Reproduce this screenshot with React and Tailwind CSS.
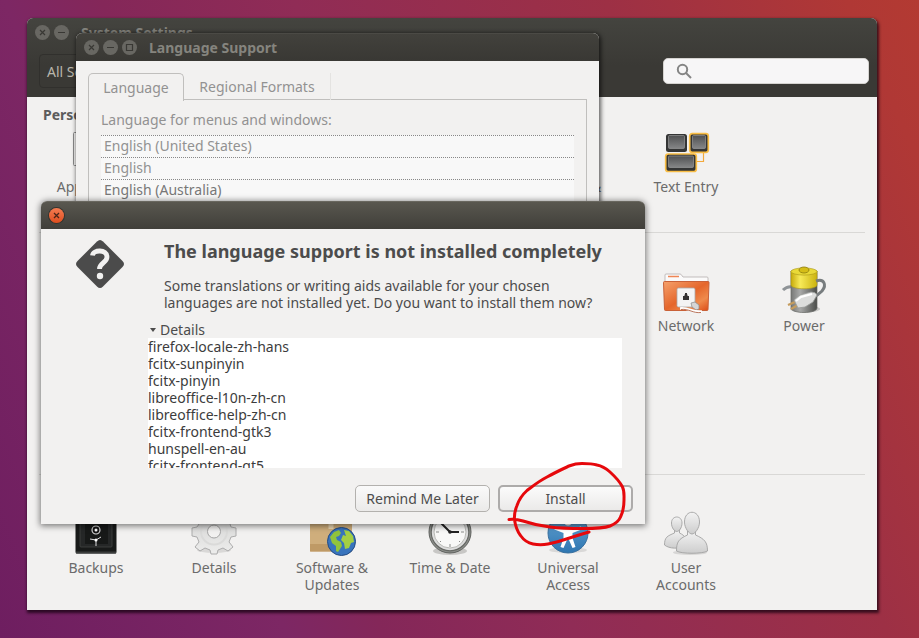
import React from "react";

function DeskIcon({ children }) {
  return (
    <svg viewBox="0 0 48 48" className="h-12 w-12 shrink-0" aria-hidden="true">
      {children}
    </svg>
  );
}

function AppearanceIcon() {
  return (
    <DeskIcon>
      <rect x="1.5" y="5.5" width="45" height="33" rx="1" fill="#f6f5f4" stroke="#8a8a8a" />
      <rect x="5" y="9" width="38" height="26" fill="#7b2866" />
    </DeskIcon>
  );
}

function TextEntryIcon() {
  return (
    <DeskIcon>
      <defs>
        <linearGradient id="keycap" x1="0" y1="0" x2="0" y2="1">
          <stop offset="0" stopColor="#505152" />
          <stop offset="1" stopColor="#858687" />
        </linearGradient>
      </defs>
      <path d="M35 34.500H41.500V26" fill="none" stroke="#f3a93c" strokeWidth="1.200" />
      <rect x="4" y="7" width="21" height="18" rx="2.500" fill="#343535" />
      <rect x="6.500" y="8.500" width="16" height="13" rx="1" fill="url(#keycap)" stroke="#a2a3a3" strokeWidth=".6" />
      <rect x="27.700" y="6.700" width="18.600" height="18.600" rx="2.500" fill="#343535" stroke="#f8bd45" strokeWidth="1.700" />
      <rect x="30.500" y="8.500" width="13" height="13" rx="1" fill="url(#keycap)" stroke="#a2a3a3" strokeWidth=".6" />
      <rect x="3.700" y="27" width="30.600" height="17.500" rx="2.500" fill="#343535" stroke="#f8bd45" strokeWidth="1.700" />
      <rect x="6.500" y="29" width="25" height="11.500" rx="1" fill="url(#keycap)" stroke="#a2a3a3" strokeWidth=".6" />
    </DeskIcon>
  );
}

function NetworkIcon() {
  return (
    <DeskIcon>
      <defs>
        <linearGradient id="folder" x1="0" y1="0" x2="1" y2="1">
          <stop offset="0" stopColor="#f5a16c" />
          <stop offset=".5" stopColor="#e5662b" />
          <stop offset=".75" stopColor="#ef8a4c" />
          <stop offset="1" stopColor="#dc4b16" />
        </linearGradient>
      </defs>
      <path d="M3 44V9q0-1 1-1h14q1 0 1.500 1l1.500 2h24q1 0 1 1v10z" fill="#fbfafa" stroke="#b5afad" strokeWidth=".8" />
      <path d="M6 10.500h11" stroke="#ef8655" strokeWidth="1.500" />
      <path d="M1.500 16.500q0-1 1-1h43.500q1 0 1 1l-1 27q0 1-1 1H3.500q-1 0-1-1z" fill="url(#folder)" stroke="#c96138" strokeWidth="1" />
      <rect x="15" y="22" width="18" height="19" rx="1.500" fill="#f4f4f4" stroke="#aaa" strokeWidth=".8" />
      <path d="M21 30h1.500v-1.500H23V27h2v1.500h.500V30H27v4h-6z" fill="#353333" />
      <path d="m29 37 4-1 4 3v4l-3 1-4-3z" fill="#d5d5d5" stroke="#888" strokeWidth=".7" />
      <path d="M18 42.500c9-1 12 4 22 3" fill="none" stroke="#fff" strokeWidth="2.600" />
      <path d="M19 43.500c8-1 12 4 20 3" fill="none" stroke="#a85232" strokeWidth=".8" />
    </DeskIcon>
  );
}

function PowerIcon() {
  return (
    <DeskIcon>
      <defs>
        <linearGradient id="cell" x1="0" y1="0" x2="1" y2="0">
          <stop offset="0" stopColor="#777876" />
          <stop offset=".35" stopColor="#a9aaa9" />
          <stop offset="1" stopColor="#4b4d4a" />
        </linearGradient>
        <linearGradient id="cap" x1="0" y1="0" x2="1" y2="0">
          <stop offset="0" stopColor="#c7ab0b" />
          <stop offset=".35" stopColor="#f7ea58" />
          <stop offset="1" stopColor="#cbb30e" />
        </linearGradient>
      </defs>
      <ellipse cx="25" cy="43" rx="15" ry="3.500" fill="#c9c9c7" />
      <path d="M3 24c3-3 6-4 10-3" fill="none" stroke="#8f9497" strokeWidth="3" />
      <path d="M11 5v37c0 6 26 6 26 0V5z" fill="url(#cell)" stroke="#676866" strokeWidth=".7" />
      <path d="M11 5v14c0 5 26 5 26 0V5z" fill="url(#cap)" stroke="#a79515" strokeWidth=".6" />
      <ellipse cx="24" cy="5.500" rx="13" ry="3.600" fill="#e9d937" stroke="#a79515" strokeWidth=".6" />
      <ellipse cx="24" cy="4" rx="5" ry="3" fill="#d5bd17" stroke="#8d7b0c" strokeWidth=".8" />
      <path d="M36 15c8-3 11 4 6 10-3 3-4 4-8 6" fill="none" stroke="#777c7e" strokeWidth="3" />
      <path d="m15 36-7 3m10 0-7 4" stroke="#c59c5d" strokeWidth="2.300" />
      <path d="m14 34 6-5 11-3q5 0 6 3l-4 7-8 5-7 1z" fill="#dcdddc" stroke="#989b98" strokeWidth=".8" />
      <path d="m16 35 5-4 11-3" stroke="#fff" strokeWidth="2" fill="none" />
    </DeskIcon>
  );
}

function BackupsIcon() {
  return (
    <DeskIcon>
      <rect x="3.500" y="3" width="41" height="42.500" rx="1.500" fill="#181a19" />
      <path d="M4 44.500h40" stroke="#3b3d3c" strokeWidth="2" />
      <rect x="8" y="7" width="32" height="32" rx="1" fill="#252727" stroke="#414443" strokeWidth=".8" />
      <rect x="13" y="11" width="23" height="25" fill="#171918" />
      <circle cx="24" cy="22" r="4" fill="#141414" stroke="#d8d8d8" strokeWidth="1.200" />
      <circle cx="24" cy="22" r="1.500" fill="#fff" />
      <path d="m18 31 6 1 5-3m-5 3v6" stroke="#ddd" strokeWidth="1" fill="none" />
      <circle cx="24" cy="32" r="1.500" fill="#fff" />
    </DeskIcon>
  );
}

function DetailsIcon() {
  return (
    <DeskIcon>
      <defs>
        <linearGradient id="gear" x1="0" y1="0" x2="0" y2="1">
          <stop offset="0" stopColor="#d0d0cf" />
          <stop offset="1" stopColor="#ededec" />
        </linearGradient>
      </defs>
      <ellipse cx="24" cy="42" rx="17" ry="3" fill="#d9d8d7" />
      <path
        d="M20 1h8l1 6 4 2 5-4 6 6-4 5 1 3 5 1v8l-5 1-2 5 4 5-5 4-5-3-5 2-1 4h-6l-1-4-5-2-5 3-5-4 4-5-2-5-5-1v-8l5-1 2-3-4-5 6-6 5 4 3-2z"
        fill="url(#gear)"
        stroke="#acacac"
        strokeWidth="1"
        strokeLinejoin="round"
      />
      <circle cx="24" cy="23.500" r="13" fill="none" stroke="#dadad9" strokeWidth="2" />
      <circle cx="24" cy="23.500" r="6.500" fill="#f2f1f0" stroke="#a4a4a4" strokeWidth="1" />
    </DeskIcon>
  );
}

function SoftwareIcon() {
  return (
    <DeskIcon>
      <rect x="2" y="4" width="42" height="39.500" rx="1" fill="#cfae7c" />
      <rect x="2" y="36" width="42" height="7.500" fill="#bf9a66" />
      <path d="M23 4v17" stroke="#ead6b2" strokeWidth="5" />
      <circle cx="33.500" cy="33.500" r="14" fill="#3874bd" stroke="#234b83" />
      <path d="m22 29 4-5 5-2 2 3-2 3-3 1 1 3 4 2 1 4-4 6-2-1v-5l-4-3z" fill="#91c43c" />
      <path d="m36 22 5 1 4 5 1 6-3 1-2 5-4 1-1-6-3-3 2-5 3 1z" fill="#a4cf43" />
    </DeskIcon>
  );
}

function ClockIcon() {
  return (
    <DeskIcon>
      <ellipse cx="24" cy="43" rx="17" ry="4" fill="#c8c7c5" />
      <circle cx="24" cy="24" r="21" fill="#8c8e8a" stroke="#60625f" />
      <circle cx="24" cy="24" r="18.800" fill="#ddd" stroke="#666864" strokeWidth="1.200" />
      <circle cx="24" cy="24" r="16" fill="#f8f8f7" stroke="#b8b9b5" />
      <path d="M24 10v3m0 23v3M10 24h3m22 0h3M14 14l1 1m18 18 1 1M14 34l1-1" stroke="#8b8c8a" strokeWidth="1" />
      <path d="m15 15 9 9h9" stroke="#222" strokeWidth="2" fill="none" />
      <circle cx="24" cy="24" r="1.800" fill="#222" />
    </DeskIcon>
  );
}

function AccessIcon() {
  return (
    <DeskIcon>
      <defs>
        <linearGradient id="access" x1="0" y1="0" x2="0" y2="1">
          <stop offset="0" stopColor="#66a4d3" />
          <stop offset="1" stopColor="#2e76b1" />
        </linearGradient>
      </defs>
      <ellipse cx="24" cy="42" rx="19" ry="3" fill="#d9d8d7" />
      <circle cx="24" cy="25" r="20" fill="url(#access)" stroke="#39709f" />
      <circle cx="24" cy="14" r="3.500" fill="#fff" />
      <path d="m11 18.500 10 2.500h6l10-2.500.500 3-9 3.500v5l3 9-3 1-3.500-8h-2L19.500 40l-3-1 3-9v-5l-9-3.500z" fill="#fff" />
    </DeskIcon>
  );
}

function UsersIcon() {
  return (
    <DeskIcon>
      <defs>
        <linearGradient id="person" x1="0" y1="0" x2="0" y2="1">
          <stop offset="0" stopColor="#f3f3f3" />
          <stop offset="1" stopColor="#cdcdcd" />
        </linearGradient>
      </defs>
      <ellipse cx="28" cy="44.500" rx="17" ry="2.500" fill="#d7d6d5" />
      <g fill="url(#person)" stroke="#a3a3a3" strokeWidth=".9">
        <path d="M2.500 37c0-8 3-9 10-12v-3h5v3c6 3 7 5 7 13-8 3-17 3-22-1z" />
        <path d="M9.500 15c0-8 10.500-8 10.500 0 0 5-3 8.500-5.200 8.500S9.500 20 9.500 15z" />
        <path d="M14.500 43c0-9 2-12 11-16v-4h8v4c9 4 12 7 12 16-5 3-26 3-31 0z" />
        <path d="M22.500 14c0-13 15-13 15 0 0 6-4.500 12-7.500 12s-7.500-6-7.500-12z" />
      </g>
    </DeskIcon>
  );
}

const COLUMN = {
  1: "col-start-1",
  2: "col-start-2",
  3: "col-start-3",
  4: "col-start-4",
  5: "col-start-5",
  6: "col-start-6",
  7: "col-start-7",
};

function Launcher({ column, icon, lines }) {
  return (
    <a href="#" className={`${COLUMN[column]} flex flex-col items-center gap-[3px] text-center text-[#6b6b6b]`}>
      {icon}
      <span>
        {lines.map((line) => (
          <span key={line} className="block whitespace-nowrap">
            {line}
          </span>
        ))}
      </span>
    </a>
  );
}

function WindowDot({ kind }) {
  return (
    <button type="button" aria-label={kind} className="flex h-[15px] w-[15px] items-center justify-center rounded-full bg-[#686762]">
      <svg viewBox="0 0 15 15" className="h-[15px] w-[15px]" fill="none" stroke="#393834" strokeWidth="1.2" aria-hidden="true">
        {kind === "Close" && <path d="m5 5 5 5m0-5-5 5" />}
        {kind === "Minimize" && <path d="M4 7.500h7" />}
        {kind === "Maximize" && <path d="M4.500 4.500h6v6h-6z" />}
      </svg>
    </button>
  );
}

const ROW = "grid grid-cols-[repeat(7,118px)] pl-[10px]";

function SettingsWindow() {
  return (
    <main className="mr-[42px] ml-[27px] overflow-hidden rounded-t-md bg-[#f2f1f0] shadow-[1px_2px_3px_1px_rgba(20,0,15,0.75)]">
      <header className="h-[79px] bg-linear-to-b from-[#44443f] to-[#3a3935] to-60%">
        <div className="flex h-7 items-center gap-1 pl-2">
          <WindowDot kind="Close" />
          <WindowDot kind="Minimize" />
          <h1 className="ml-2 font-bold text-[#85847e]">System Settings</h1>
        </div>
        <div className="flex items-center justify-between pt-2 pr-2 pl-3">
          <button type="button" className="h-[34px] rounded-sm border border-[#31302d] px-[7px] text-[#b9b6ab]">
            All Settings
          </button>
          <label className="flex h-[26px] w-[206px] items-center rounded-[5px] border border-[#d5d3d0] bg-[#f7f6f7] pl-3">
            <svg viewBox="0 0 16 16" className="h-4 w-4" fill="none" stroke="#858585" strokeWidth="2" aria-hidden="true">
              <circle cx="6.500" cy="6.500" r="4.700" />
              <path d="m10 10 5 5" />
            </svg>
            <input type="search" aria-label="Search settings" className="min-w-0 flex-1 bg-transparent px-2 outline-none" />
          </label>
        </div>
      </header>

      <section className="h-[135px] pt-[9px]">
        <h2 className="pl-4 font-bold text-[#5c5c5c]">Personal</h2>
        <div className={`${ROW} pt-1`}>
          <Launcher column={1} icon={<AppearanceIcon />} lines={["Appearance"]} />
          <Launcher column={5} icon={<span className="h-12 w-12" />} lines={["Security &"]} />
          <Launcher column={6} icon={<TextEntryIcon />} lines={["Text Entry"]} />
        </div>
      </section>

      <section className="mx-3 h-[242px] border-t border-[#d9d8d6] pt-[33px]">
        <div className={`${ROW} -mx-3`}>
          <Launcher column={6} icon={<NetworkIcon />} lines={["Network"]} />
          <Launcher column={7} icon={<PowerIcon />} lines={["Power"]} />
        </div>
      </section>

      <section className="mx-3 border-t border-[#d9d8d6] pt-[33px] pb-[17px]">
        <div className={`${ROW} -mx-3`}>
          <Launcher column={1} icon={<BackupsIcon />} lines={["Backups"]} />
          <Launcher column={2} icon={<DetailsIcon />} lines={["Details"]} />
          <Launcher column={3} icon={<SoftwareIcon />} lines={["Software &", "Updates"]} />
          <Launcher column={4} icon={<ClockIcon />} lines={["Time & Date"]} />
          <Launcher column={5} icon={<AccessIcon />} lines={["Universal", "Access"]} />
          <Launcher column={6} icon={<UsersIcon />} lines={["User", "Accounts"]} />
        </div>
      </section>
    </main>
  );
}

function LanguageWindow() {
  return (
    <section className="absolute top-[33px] left-[76px] w-[523px] overflow-hidden rounded-t-md bg-[#f2f1f0] shadow-[1px_1px_4px_1px_rgba(0,0,0,0.6)]">
      <header className="flex h-7 items-center gap-1 border-t border-[#4b4a45] bg-linear-to-b from-[#42413c] to-[#393834] pl-2">
        <WindowDot kind="Close" />
        <WindowDot kind="Minimize" />
        <WindowDot kind="Maximize" />
        <h2 className="ml-2 font-bold text-[#85847e]">Language Support</h2>
      </header>
      <div className="h-[148px] px-3 pt-3 text-[#929292]">
        <div role="tablist" className="flex h-[27px]">
          <button type="button" role="tab" aria-selected="true" className="z-10 -mb-px w-24 rounded-t-[5px] border border-b-0 border-[#c0bfbd] bg-[#f2f1f0]">
            Language
          </button>
          <button type="button" role="tab" aria-selected="false" className="w-[147px] border-r border-[#e4e3e1]">
            Regional Formats
          </button>
        </div>
        <div className="-mt-px h-[120px] border border-[#c0bfbd] px-3 pt-[11px]">
          <p>Language for menus and windows:</p>
          <ul className="mt-[7px] bg-[#f8f8f8]">
            <li className="h-[22px] border-t border-dotted border-[#888] pt-px pl-[3px]">English (United States)</li>
            <li className="h-[22px] border-t border-dotted border-[#888] pt-px pl-[3px]">English</li>
            <li className="h-[22px] border-t border-dotted border-[#888] pt-px pl-[3px] text-[#777]">English (Australia)</li>
          </ul>
        </div>
      </div>
    </section>
  );
}

const PACKAGES = [
  "firefox-locale-zh-hans",
  "fcitx-sunpinyin",
  "fcitx-pinyin",
  "libreoffice-l10n-zh-cn",
  "libreoffice-help-zh-cn",
  "fcitx-frontend-gtk3",
  "hunspell-en-au",
  "fcitx-frontend-qt5",
];

function InstallDialog() {
  return (
    <section
      role="dialog"
      aria-labelledby="dialog-title"
      className="absolute top-[201px] left-[41px] w-[604px] rounded-t-md bg-[#f2f1f0] text-[#4c4c4c] shadow-[0_1px_6px_1px_rgba(0,0,0,0.5)]"
    >
      <header className="flex h-7 items-center rounded-t-md border-t border-[#69675f] bg-linear-to-b from-[#59574f] to-[#403f3a] pl-2">
        <button type="button" aria-label="Close" className="h-[15px] w-[15px] rounded-full bg-linear-to-b from-[#f47b50] to-[#df4d1c] ring-1 ring-[#35342f]">
          <svg viewBox="0 0 15 15" className="h-[15px] w-[15px]" stroke="#4b2518" strokeWidth="1.3" aria-hidden="true">
            <path d="m5 5 5 5m0-5-5 5" />
          </svg>
        </button>
      </header>
      <div className="pt-[11px] pr-3 pb-3 pl-[13px]">
        <div className="flex gap-10 pl-[22px]">
          <svg viewBox="0 0 48 48" className="h-12 w-12 shrink-0" aria-hidden="true">
            <path d="M21 1.500q3-3 6 0L46.500 21q3 3 0 6L27 46.500q-3 3-6 0L1.500 27q-3-3 0-6z" fill="#4b4b4b" />
            <path d="M16.500 15.500c.500-6 14.500-6.500 14.500 1.500 0 6-7.500 5.500-7.500 12" fill="none" stroke="#f2f1f0" strokeWidth="4.800" />
            <circle cx="24" cy="36" r="3.200" fill="#f2f1f0" />
          </svg>
          <div className="whitespace-nowrap">
            <h2 id="dialog-title" className="text-[18px] leading-[22px] font-bold">
              The language support is not installed completely
            </h2>
            <p className="mt-[15px]">
              Some translations or writing aids available for your chosen
              <br />
              languages are not installed yet. Do you want to install them now?
            </p>
          </div>
        </div>
        <details open className="mt-2.5 mr-[11px] ml-[94px]">
          <summary className="flex items-center gap-1 pl-0.5">
            <svg viewBox="0 0 6 4" className="h-1 w-1.5" aria-hidden="true">
              <path d="M0 0h6L3 4z" fill="#4c4c4c" />
            </svg>
            Details
          </summary>
          <ul className="h-[130px] overflow-hidden bg-white text-[#3c3c3c]">
            {PACKAGES.map((name) => (
              <li key={name}>{name}</li>
            ))}
          </ul>
        </details>
        <div className="mt-[17px] flex justify-end gap-2">
          <button type="button" className="h-[27px] w-[135px] rounded-[5px] border border-[#b3b1ae] bg-linear-to-b from-[#fafafa] to-[#ebeae9] whitespace-nowrap">
            Remind Me Later
          </button>
          <button type="button" className="h-[27px] w-[135px] rounded-[5px] border-2 border-[#adabaa] bg-linear-to-b from-[#fbfbfb] to-[#ebeae9]">
            Install
          </button>
        </div>
      </div>
    </section>
  );
}

function MarkerStroke() {
  return (
    <svg viewBox="0 0 128 92" className="pointer-events-none absolute top-[458px] left-[504px] h-[92px] w-32" aria-hidden="true">
      <path
        d="M5 61.500c5-.500 9 0 14 1.500 9 3 18 5 27 6 12 1.500 22 1.500 33 1.500 11 0 20 0 27-2.500 6-2.500 9-5 10.500-9 3-6 3.500-12 3.500-17 0-6 .500-9-1.500-13-2.500-5-7-10-12.500-15C101 9.500 96 7.500 93 7c-5-1.500-10-1.500-15-1.500-9 0-12 1.500-35 13.500-8 4-14 9-20 13.500C17 38 14.500 43 13 47.500c-2.500 6-3 9-2.500 14.500 1 6 2.500 11 6 15.500C20 82.500 24 85 29 86c5 1 10 1 15 0 13-2.500 26-8 41-12"
        fill="none"
        stroke="#e6080c"
        strokeWidth="3"
        strokeLinecap="round"
        strokeLinejoin="round"
      />
    </svg>
  );
}

export default function App() {
  return (
    <div className="relative min-h-screen overflow-hidden bg-[linear-gradient(66deg,#6e1e60_0%,#7d2764_24%,#842759_32%,#902c56_48%,#9d3045_74%,#b03835_94%,#b33a32_100%)] pt-[18px] pb-7 font-['Noto_Sans',sans-serif] text-[14px] leading-[17px]">
      <SettingsWindow />
      <LanguageWindow />
      <InstallDialog />
      <MarkerStroke />
    </div>
  );
}
